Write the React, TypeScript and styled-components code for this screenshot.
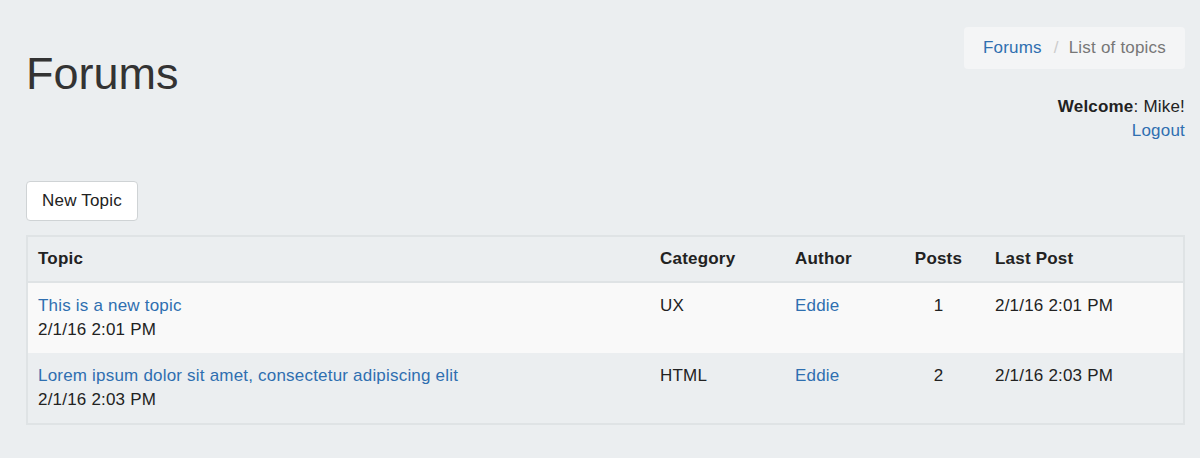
import React from "react";
import styled, { createGlobalStyle } from "styled-components";

const GlobalStyle = createGlobalStyle`
  html, body { margin: 0; padding: 0; background: #ebeef0; }
  body {
    font-family: "Liberation Sans", Arial, Helvetica, sans-serif;
    font-size: 17px;
    letter-spacing: 0.2px;
    line-height: 22px;
    color: #222;
  }
  * { box-sizing: border-box; }
`;

const Page = styled.div`
  padding: 27px 15px 20px 26px;
  width: 1200px;
`;

const Header = styled.div`
  display: flex;
  justify-content: space-between;
  align-items: flex-start;
`;

const Title = styled.h1`
  margin: 22px 0 0 0;
  font-size: 45px;
  line-height: 50px;
  font-weight: 400;
  letter-spacing: 0;
  color: #333;
`;

const RightCol = styled.div`
  display: flex;
  flex-direction: column;
  align-items: flex-end;
`;

const Breadcrumb = styled.nav`
  display: flex;
  align-items: center;
  background: #f4f5f6;
  border-radius: 4px;
  padding: 10px 19px;
  line-height: 22px;
  color: #777;
`;

const Sep = styled.span`
  color: #ccc;
  padding: 0 10px 0 12px;
`;

const Link = styled.a`
  color: #2f6fb0;
  text-decoration: none;
`;

const UserBox = styled.div`
  margin-top: 26px;
  text-align: right;
  line-height: 24px;
  color: #222;
`;

const Toolbar = styled.div`
  margin-top: 38px;
  margin-bottom: 14px;
`;

const Button = styled.button`
  font-family: inherit;
  font-size: 17px;
  letter-spacing: 0.2px;
  line-height: 22px;
  color: #222;
  background: #fff;
  border: 1px solid #cfd3d5;
  border-radius: 4px;
  padding: 8px 15px;
`;

const TableFrame = styled.div`
  border: 2px solid #dfe3e5;
`;

const Table = styled.table`
  width: 100%;
  border-collapse: collapse;
  table-layout: fixed;
`;

const Th = styled.th<{ $center?: boolean }>`
  text-align: ${(p) => (p.$center ? "center" : "left")};
  font-weight: 700;
  padding: 11px 10px;
  line-height: 22px;
  color: #222;
  border-bottom: 2px solid #dfe3e5;
`;

const Tr = styled.tr<{ $striped?: boolean }>`
  background: ${(p) => (p.$striped ? "#f9f9f9" : "transparent")};
  & + & td { border-top: 2px solid #dfe3e5; }
`;

const Td = styled.td<{ $center?: boolean }>`
  text-align: ${(p) => (p.$center ? "center" : "left")};
  vertical-align: top;
  padding: 11px 10px;
  line-height: 24px;
  color: #222;
`;

const DateLine = styled.div``;

const rows = [
  { topic: "This is a new topic", date: "2/1/16 2:01 PM", cat: "UX", author: "Eddie", posts: 1, last: "2/1/16 2:01 PM" },
  { topic: "Lorem ipsum dolor sit amet, consectetur adipiscing elit", date: "2/1/16 2:03 PM", cat: "HTML", author: "Eddie", posts: 2, last: "2/1/16 2:03 PM" },
];

export default function App() {
  return (
    <>
      <GlobalStyle />
      <Page>
        <Header>
          <Title>Forums</Title>
          <RightCol>
            <Breadcrumb>
              <Link href="#">Forums</Link>
              <Sep>/</Sep>
              <span>List of topics</span>
            </Breadcrumb>
            <UserBox>
              <div><b>Welcome</b>: Mike!</div>
              <div><Link href="#">Logout</Link></div>
            </UserBox>
          </RightCol>
        </Header>
        <Toolbar>
          <Button>New Topic</Button>
        </Toolbar>
        <TableFrame>
          <Table>
            <colgroup>
              <col style={{ width: 622 }} />
              <col style={{ width: 135 }} />
              <col style={{ width: 107 }} />
              <col style={{ width: 93 }} />
              <col />
            </colgroup>
            <thead>
              <tr>
                <Th>Topic</Th>
                <Th>Category</Th>
                <Th>Author</Th>
                <Th $center>Posts</Th>
                <Th>Last Post</Th>
              </tr>
            </thead>
            <tbody>
              {rows.map((r, i) => (
                <Tr key={i} $striped={i % 2 === 0}>
                  <Td>
                    <Link href="#">{r.topic}</Link>
                    <DateLine>{r.date}</DateLine>
                  </Td>
                  <Td>{r.cat}</Td>
                  <Td><Link href="#">{r.author}</Link></Td>
                  <Td $center>{r.posts}</Td>
                  <Td>{r.last}</Td>
                </Tr>
              ))}
            </tbody>
          </Table>
        </TableFrame>
      </Page>
    </>
  );
}
